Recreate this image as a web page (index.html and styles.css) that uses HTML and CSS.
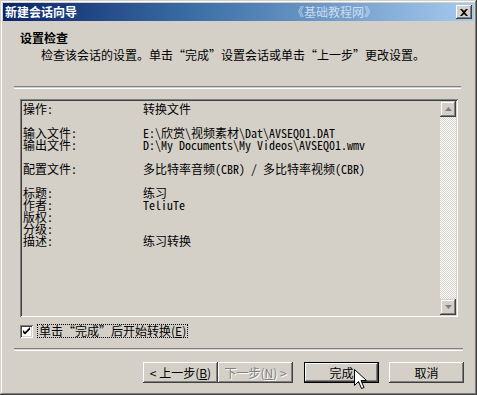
FILE: index.html
```html
<!DOCTYPE html>
<html lang="zh-CN">
<head>
<meta charset="utf-8">
<title>新建会话向导</title>
<link rel="stylesheet" href="styles.css">
</head>
<body>
<div class="window">
  <div class="titlebar">
    <span class="title">新建会话向导</span>
    <span class="watermark">《基础教程网》</span>
    <span class="close"><svg width="8" height="7" viewBox="0 0 8 7"><path d="M0 0h2l2 2 2-2h2L5 3.5 8 7H6L4 5 2 7H0l3-3.5z" fill="#000"/></svg></span>
  </div>
  <div class="header">
    <div class="h-title">设置检查</div>
    <div class="h-sub">检查该会话的设置。单击“完成”设置会话或单击“上一步”更改设置。</div>
  </div>
  <div class="sep sep-top"></div>
  <div class="listbox">
    <div class="list">
      <div class="row"><span class="k">操作:</span><span class="v">转换文件</span></div>
      <div class="row blank"></div>
      <div class="row"><span class="k">输入文件:</span><span class="v">E:\欣赏\视频素材\Dat\AVSEQ01.DAT</span></div>
      <div class="row"><span class="k">输出文件:</span><span class="v">D:\My Documents\My Videos\AVSEQ01.wmv</span></div>
      <div class="row blank"></div>
      <div class="row"><span class="k">配置文件:</span><span class="v">多比特率音频(CBR) / 多比特率视频(CBR)</span></div>
      <div class="row blank"></div>
      <div class="row"><span class="k">标题:</span><span class="v">练习</span></div>
      <div class="row"><span class="k">作者:</span><span class="v">TeliuTe</span></div>
      <div class="row"><span class="k">版权:</span><span class="v"></span></div>
      <div class="row"><span class="k">分级:</span><span class="v"></span></div>
      <div class="row"><span class="k">描述:</span><span class="v">练习转换</span></div>
    </div>
    <div class="scrollbar">
      <div class="sb-btn"><svg width="7" height="4" viewBox="0 0 7 4"><path d="M3.5 0L7 4H0z" fill="#808080"/></svg></div>
      <div class="sb-track"></div>
      <div class="sb-btn"><svg width="7" height="4" viewBox="0 0 7 4"><path d="M0 0h7L3.5 4z" fill="#808080"/></svg></div>
    </div>
  </div>
  <div class="check-row">
    <span class="checkbox"><svg width="9" height="9" viewBox="0 0 9 9"><path d="M1 3l2 2 5-5v2.5L3 7.5 1 5.5z" fill="#000"/></svg></span>
    <span class="check-label">单击“完成”后开始转换(<u>E</u>)</span>
  </div>
  <div class="sep sep-bottom"></div>
  <div class="buttons">
    <div class="btn">&lt; 上一步(<u>B</u>)</div>
    <div class="btn disabled">下一步(<u>N</u>) &gt;</div>
    <div class="btn default">完成</div>
    <div class="btn">取消</div>
  </div>
  <svg class="cursor" width="13" height="21" viewBox="0 0 13 21"><path d="M0.5 0.5v16l4-4 3 7 2.5-1-3-7h5.5z" fill="#fff" stroke="#000" stroke-width="1"/></svg>
</div>
</body>
</html>
```
FILE: styles.css
```css
html, body {
  margin: 0;
  padding: 0;
  background: #d4d0c8;
}
body {
  font-family: "Noto Sans CJK SC", "Liberation Sans", sans-serif;
  font-size: 12px;
  line-height: 12px;
  color: #000;
}
.window {
  position: relative;
  width: 477px;
  height: 395px;
  box-sizing: border-box;
  padding: 3px 3px 3px 3px;
  background: #d4d0c8;
  box-shadow: inset -1px -1px #404040, inset 1px 1px #d4d0c8, inset -2px -2px #808080, inset 2px 2px #ffffff;
  display: flex;
  flex-direction: column;
}
.titlebar {
  height: 18px;
  display: flex;
  align-items: center;
  padding: 0 2px 0 2px;
  background: linear-gradient(to right, #0a246a 0%, #3a6ea5 40%, #a6caf0 100%);
}
.title {
  color: #fff;
  font-weight: bold;
  margin-left: 0;
}
.watermark {
  color: rgba(235, 242, 252, 0.75);
  margin-left: 215px;
}
.close {
  margin-left: auto;
  width: 16px;
  height: 14px;
  box-sizing: border-box;
  background: #d4d0c8;
  box-shadow: inset -1px -1px #404040, inset 1px 1px #ffffff, inset -2px -2px #808080;
  display: flex;
  align-items: center;
  justify-content: center;
}
.close svg { display: block; }
.header {
  padding: 11px 0 0 17px;
}
.h-title {
  font-weight: bold;
}
.h-sub {
  margin-top: 5px;
  padding-left: 21px;
}
.sep {
  height: 1px;
  border-top: 1px solid #808080;
  border-bottom: 1px solid #ffffff;
}
.sep-top {
  margin: 25px 13px 0 11px;
}
.sep-bottom {
  margin: 10px 11px 0 11px;
}
.listbox {
  margin: 10px 16px 0 17px;
  height: 218px;
  box-sizing: border-box;
  display: flex;
  box-shadow: inset 1px 1px #808080, inset -1px -1px #ffffff, inset 2px 2px #404040, inset -2px -2px #d4d0c8;
  padding: 2px;
}
.list {
  flex: 1;
  padding: 2px 0 0 1px;
  font-family: "Noto Sans Mono CJK SC", "Noto Sans CJK SC", "Liberation Mono", monospace;
}
.row {
  display: grid;
  grid-template-columns: 120px 1fr;
  height: 12px;
  white-space: pre;
}
.scrollbar {
  width: 16px;
  display: flex;
  flex-direction: column;
}
.sb-btn {
  height: 16px;
  box-sizing: border-box;
  background: #d4d0c8;
  box-shadow: inset -1px -1px #404040, inset 1px 1px #d4d0c8, inset -2px -2px #808080, inset 2px 2px #ffffff;
  display: flex;
  align-items: center;
  justify-content: center;
}
.sb-btn svg { display: block; }
.sb-track {
  flex: 1;
  background-color: #ffffff;
  background-image: repeating-conic-gradient(#d4d0c8 0 25%, #ffffff 0 50%);
  background-size: 2px 2px;
}
.check-row {
  margin: 7px 0 0 17px;
  display: flex;
  align-items: center;
  height: 14px;
}
.checkbox {
  width: 13px;
  height: 13px;
  box-sizing: border-box;
  background: #fff;
  box-shadow: inset 1px 1px #808080, inset -1px -1px #ffffff, inset 2px 2px #404040, inset -2px -2px #d4d0c8;
  display: flex;
  align-items: center;
  justify-content: center;
}
.checkbox svg { display: block; }
.check-label {
  margin-left: 4px;
  border: 1px dotted #000;
  padding: 0 1px;
  line-height: 12px;
}
.buttons {
  margin: 11px 0 0 140px;
  display: flex;
}
.btn {
  width: 75px;
  height: 21px;
  box-sizing: border-box;
  background: #d4d0c8;
  box-shadow: inset -1px -1px #404040, inset 1px 1px #ffffff, inset -2px -2px #808080;
  display: flex;
  align-items: center;
  justify-content: center;
}
.btn.disabled {
  color: #808080;
  text-shadow: 1px 1px #ffffff;
}
.btn.default {
  margin-left: 11px;
  box-shadow: inset 0 0 0 1px #000, inset -2px -2px #404040, inset 2px 2px #ffffff, inset -3px -3px #808080;
}
.btn.default + .btn {
  margin-left: 10px;
}
.cursor {
  position: absolute;
  left: 354px;
  top: 369px;
}
```
